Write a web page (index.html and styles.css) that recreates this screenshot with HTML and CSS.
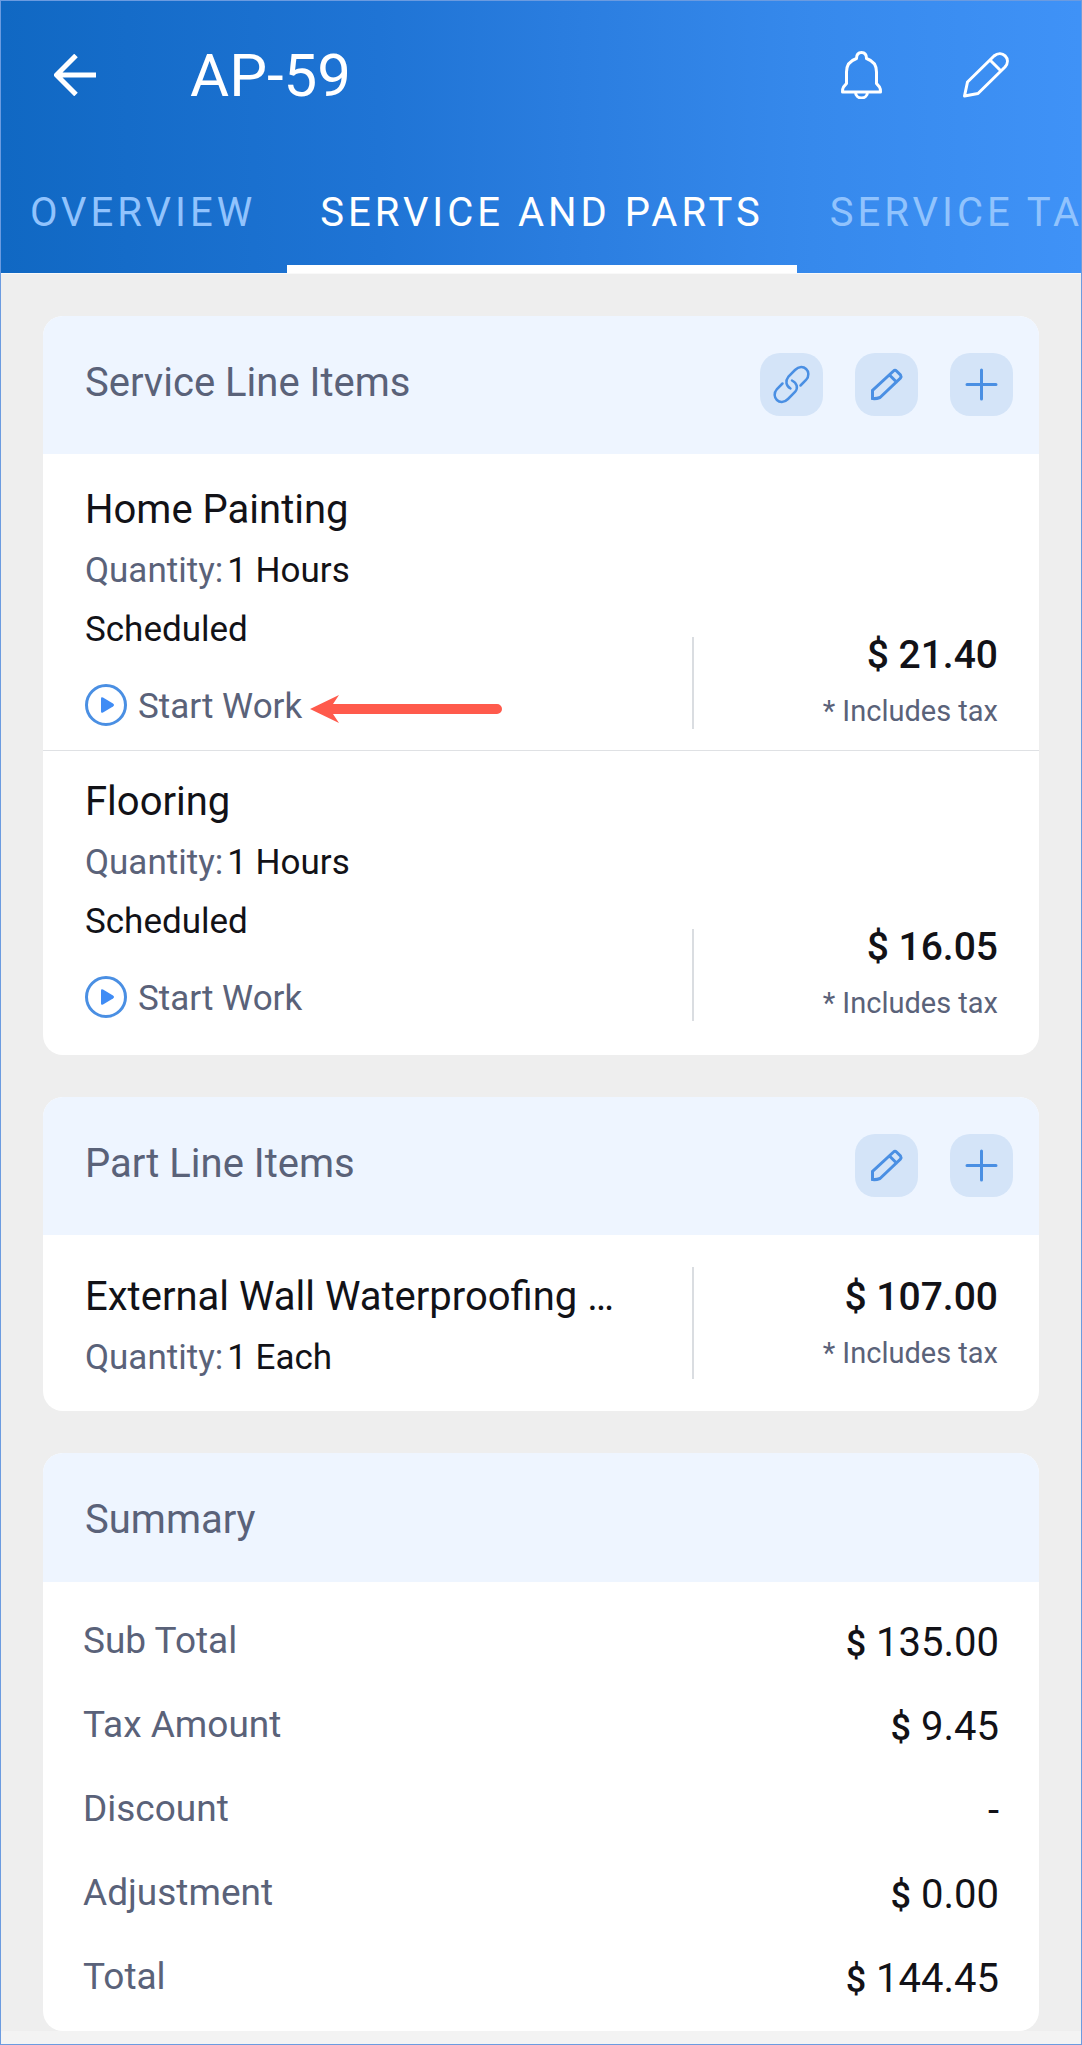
FILE: index.html
```
<!DOCTYPE html>
<html lang="en">
<head>
	<meta charset="utf-8">
	<meta name="viewport" content="width=device-width, initial-scale=1">
	<title>AP-59</title>
	<link rel="stylesheet" href="styles.css">
</head>
<body>
	<header class="app-header">
		<div class="top-bar">
			<button type="button" class="icon-btn" aria-label="Back">
				<svg width="42" height="42" viewBox="0 0 42 42"><path d="M42 21H3M22 1.500L2.500 21L22 40.500" stroke-width="5"/></svg>
			</button>
			<h1>AP-59</h1>
			<button type="button" class="icon-btn" aria-label="Notifications">
				<svg width="41" height="48" viewBox="0 0 41 48"><path d="M15.500 7.500C15.500 3.500 17.500 1.500 20.500 1.500S25.500 3.500 25.500 7.500C31.500 9.500 35.500 14 35.500 21V32.500L38.500 36C39.500 37.500 39.500 39 39.500 41H1.500C1.500 39 1.500 37.500 2.500 36L5.500 32.500V21C5.500 14 9.500 9.500 15.500 7.500ZM14.500 41C14.500 49 26.500 49 26.500 41" stroke-width="3"/></svg>
			</button>
			<button type="button" class="icon-btn" aria-label="Edit">
				<svg width="46" height="46" viewBox="0 0 46 46"><path d="M1.500 44L4.500 30L31 4C39-3 49 7 42 15L15 41.500ZM27 8L38 19" stroke-width="3"/></svg>
			</button>
		</div>
		<nav class="tabs">
			<a href="#overview">OVERVIEW</a>
			<a href="#parts" class="active">SERVICE AND PARTS</a>
			<a href="#tasks">SERVICE TA</a>
		</nav>
	</header>

	<main>
		<section class="card">
			<div class="card-head">
				<h2>Service Line Items</h2>
				<button type="button" class="action" aria-label="Link">
					<svg viewBox="0 0 63 63"><path d="M22.500 30.500L17 36C10 44 20 54 28 46L35 39C38.500 35 37 30 32 27.500M40.500 32.500L46 27C53 19 43 9 35 17L28.500 23.500C25 28 26 33 30.500 35.500" stroke-width="2.500"/></svg>
				</button>
				<button type="button" class="action" aria-label="Edit">
					<svg viewBox="0 0 63 63"><path d="M17.500 45.500V37.500L38.500 18Q40 16.500 41.500 18L45.500 22Q46.500 23.500 45.500 25L25 44.500Q21 46 17.500 45.500ZM34.500 22L41.500 29"/></svg>
				</button>
				<button type="button" class="action" aria-label="Add">
					<svg viewBox="0 0 63 63"><path d="M31.500 17V46M17 31.500H46"/></svg>
				</button>
			</div>
			<ul class="items">
				<li>
					<div class="info">
						<h3>Home Painting</h3>
						<p class="qty"><span>Quantity:</span>1 Hours</p>
						<p class="status">Scheduled</p>
						<div class="start-row">
							<button type="button" class="start">
								<svg width="42" height="42" viewBox="0 0 42 42"><circle cx="21" cy="21" r="19.500"/><path d="M16 14.500Q16 12.500 18 13.500L28 19.500Q30 21 28 22.500L18 28.500Q16 29.500 16 27.500Z"/></svg>
								Start Work
							</button>
							<svg class="pointer" width="192" height="28" viewBox="0 0 192 28"><path d="M0 14L29 0L23 9H187A5 5 0 0 1 187 19H23L29 28Z"/></svg>
						</div>
					</div>
					<div class="price">
						<strong>$ 21.40</strong>
						<small>* Includes tax</small>
					</div>
				</li>
				<li>
					<div class="info">
						<h3>Flooring</h3>
						<p class="qty"><span>Quantity:</span>1 Hours</p>
						<p class="status">Scheduled</p>
						<div class="start-row">
							<button type="button" class="start">
								<svg width="42" height="42" viewBox="0 0 42 42"><circle cx="21" cy="21" r="19.500"/><path d="M16 14.500Q16 12.500 18 13.500L28 19.500Q30 21 28 22.500L18 28.500Q16 29.500 16 27.500Z"/></svg>
								Start Work
							</button>
						</div>
					</div>
					<div class="price">
						<strong>$ 16.05</strong>
						<small>* Includes tax</small>
					</div>
				</li>
			</ul>
		</section>

		<section class="card">
			<div class="card-head">
				<h2>Part Line Items</h2>
				<button type="button" class="action" aria-label="Edit">
					<svg viewBox="0 0 63 63"><path d="M17.500 45.500V37.500L38.500 18Q40 16.500 41.500 18L45.500 22Q46.500 23.500 45.500 25L25 44.500Q21 46 17.500 45.500ZM34.500 22L41.500 29"/></svg>
				</button>
				<button type="button" class="action" aria-label="Add">
					<svg viewBox="0 0 63 63"><path d="M31.500 17V46M17 31.500H46"/></svg>
				</button>
			</div>
			<ul class="items parts">
				<li>
					<div class="info">
						<h3>External Wall Waterproofing …</h3>
						<p class="qty"><span>Quantity:</span>1 Each</p>
					</div>
					<div class="price">
						<strong>$ 107.00</strong>
						<small>* Includes tax</small>
					</div>
				</li>
			</ul>
		</section>

		<section class="card">
			<div class="card-head summary-head">
				<h2>Summary</h2>
			</div>
			<dl class="summary">
				<div><dt>Sub Total</dt><dd><b>$</b> 135.00</dd></div>
				<div><dt>Tax Amount</dt><dd><b>$</b> 9.45</dd></div>
				<div><dt>Discount</dt><dd>-</dd></div>
				<div><dt>Adjustment</dt><dd><b>$</b> 0.00</dd></div>
				<div><dt>Total</dt><dd><b>$</b> 144.45</dd></div>
			</dl>
		</section>
	</main>
	<footer class="bottom-strip"></footer>
</body>
</html>
```
FILE: styles.css
```
* {
  box-sizing: border-box;
}

body {
  display: flex;
  flex-direction: column;
  min-height: 100vh;
  margin: 0;
  border: 1px solid #6b9be0;
  background-color: #eeeeee;
  color: #121217;
  font-family: Roboto, "Liberation Sans", sans-serif;
}

h1, h2, h3, p, ul, dl, dd {
  margin: 0;
  padding: 0;
  font-weight: 400;
}

button {
  padding: 0;
  border: none;
  background: none;
  font-family: inherit;
  cursor: pointer;
}

svg {
  display: block;
  flex: none;
  fill: none;
}

/* header */
.app-header {
  background: linear-gradient(to right, #1068c3, #1f74d5 35%, #2a7ddf 52%, #3689ec 75%, #3f92f7);
  border-bottom: 1px solid #f9f9f9;
}

.top-bar {
  display: flex;
  align-items: center;
  height: 150px;
  padding: 0 72px 3px 53px;
}

.top-bar h1 {
  flex: 1;
  margin-left: 94px;
  padding-top: 3px;
  color: #ffffff;
  font-size: 60px;
  line-height: 70px;
}

.icon-btn + .icon-btn {
  margin-left: 81px;
}

.icon-btn svg {
  stroke: #ffffff;
  stroke-linejoin: round;
}

.tabs {
  display: flex;
  overflow: hidden;
}

.tabs a {
  flex: none;
  padding: 2px 33px 0;
  color: #91c3fd;
  font-size: 40px;
  line-height: 120px;
  letter-spacing: 4px;
  text-decoration: none;
  white-space: nowrap;
}

.tabs a:first-child {
  padding-right: 31px;
  padding-left: 29px;
}

.tabs a.active {
  color: #ffffff;
  box-shadow: inset 0 -8px #ffffff;
}

/* cards */
main {
  display: flex;
  flex-direction: column;
  gap: 42px;
  padding: 42px 42px 0;
}

.card {
  overflow: hidden;
  border-radius: 20px;
  background-color: #ffffff;
}

.card-head {
  display: flex;
  align-items: center;
  gap: 32px;
  height: 138px;
  padding: 0 26px 2px 42px;
  background-color: #eef5ff;
}

.card-head h2 {
  flex: 1;
  padding-bottom: 2px;
  color: #5a6279;
  font-size: 40px;
  line-height: 46px;
}

.summary-head {
  height: 129px;
  padding-top: 8px;
}

.action {
  width: 63px;
  height: 63px;
  border-radius: 20px;
  background-color: #d4e4f8;
}

.action svg {
  stroke: #4a8fe3;
  stroke-width: 3;
  stroke-linecap: round;
}

/* line items */
.items {
  padding: 5px 0 13px;
  list-style: none;
}

.items li {
  display: flex;
  align-items: flex-end;
  padding: 21px 41px 21px 42px;
}

.items li + li {
  border-top: 1px solid #dfe1e4;
}

.info {
  flex: 1;
  min-width: 0;
}

.info h3 {
  overflow: hidden;
  font-size: 40px;
  line-height: 60px;
  text-overflow: ellipsis;
  white-space: nowrap;
}

.qty {
  font-size: 35px;
  line-height: 61px;
}

.qty span {
  margin-right: 4px;
  color: #5a6279;
}

.status {
  font-size: 35px;
  line-height: 57px;
}

.start-row {
  display: flex;
  align-items: center;
  gap: 8px;
  margin-top: 26px;
}

.start {
  display: flex;
  gap: 11px;
  color: #5a6279;
  font-size: 35px;
  line-height: 45px;
}

.start circle {
  stroke: #4a8fe3;
  stroke-width: 3;
}

.start path {
  fill: #3f8cf5;
}

.pointer {
  margin-top: 4px;
  fill: #ff5a4c;
}

.price {
  width: 306px;
  border-left: 2px solid #dadde1;
  text-align: right;
}

.price strong {
  display: block;
  margin-bottom: 20px;
  font-size: 39px;
  font-weight: 500;
  line-height: 36px;
}

.price small {
  display: block;
  color: #5a6279;
  font-size: 29px;
  line-height: 36px;
}

.parts {
  padding: 11px 0 2px;
}

.parts li {
  align-items: flex-start;
}

.parts .price {
  padding: 12px 0 8px;
}

/* summary */
.summary {
  padding: 17px 40px 12px;
}

.summary div {
  display: flex;
  justify-content: space-between;
  height: 84px;
}

.summary dt {
  color: #5a6279;
  font-size: 37px;
  line-height: 84px;
}

.summary dd {
  padding-top: 2px;
  font-size: 40px;
  line-height: 84px;
}

.summary b {
  font-size: 36px;
  font-weight: 500;
}

.bottom-strip {
  flex: 1;
  min-height: 12px;
  background-color: #f3f3f3;
}
```
